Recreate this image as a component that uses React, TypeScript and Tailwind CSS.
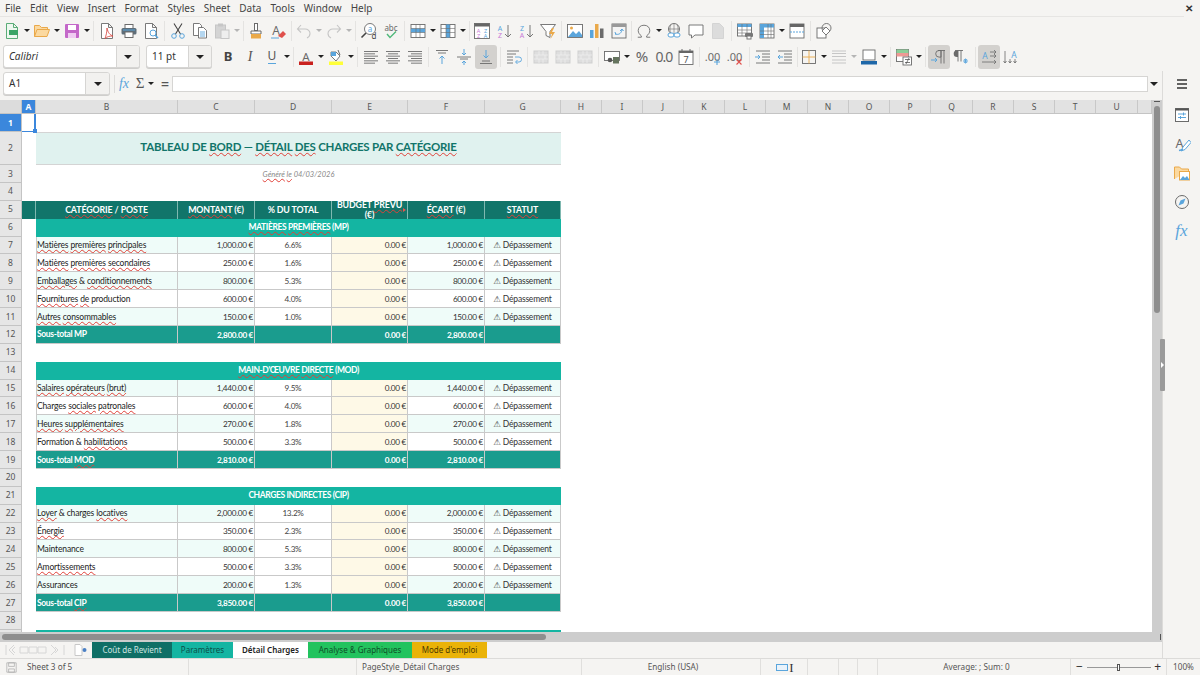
import type { ReactNode } from "react";

const BLUE = "#5aa5dc";
const GRAY = "#6b6b6b";
const LIGHT = "#c6c6c6";
const ORANGE = "#eaa94a";

function Ic({ children, size = 18 }: { children: ReactNode; size?: number }) {
  return (
    <svg width={size} height={size} viewBox="0 0 18 18" fill="none">
      {children}
    </svg>
  );
}

// toolbar pieces
function I({ children, active }: { children: ReactNode; active?: boolean }) {
  return (
    <div className={`flex h-[24px] w-[22px] shrink-0 items-center justify-center rounded-[3px] ${active ? "bg-[#d3d1ce]" : ""}`}>
      {children}
    </div>
  );
}
function D({ off }: { off?: boolean }) {
  return (
    <div className="flex w-[8px] shrink-0 justify-center">
      <div className={`h-0 w-0 border-x-[3px] border-t-[3px] border-x-transparent ${off ? "border-t-[#b5b5b5]" : "border-t-[#222]"}`} />
    </div>
  );
}
function S({ w = "w-[5px]" }: { w?: string }) {
  return (
    <div className={`flex h-[20px] shrink-0 justify-center ${w}`}>
      <div className="h-full w-px bg-[#e4e3e1]" />
    </div>
  );
}
function Txt({ x, y, s, fill, children, w = 400, it }: { x: number; y: number; s: number; fill: string; children: string; w?: number; it?: boolean }) {
  return (
    <text x={x} y={y} fontSize={s} fill={fill} fontWeight={w} fontStyle={it ? "italic" : "normal"} fontFamily="Noto Sans" textAnchor="middle">
      {children}
    </text>
  );
}
function Lines({ rows, c = GRAY }: { rows: [number, number][]; c?: string }) {
  const gap = 14 / rows.length;
  return (
    <Ic>
      {rows.map(([a, b], i) => (
        <line key={i} x1={a} x2={b} y1={3.5 + i * gap} y2={3.5 + i * gap} stroke={c} strokeWidth=".9" />
      ))}
    </Ic>
  );
}
function Doc({ c = GRAY, fill = "#fff" }: { c?: string; fill?: string }) {
  return <path d="M3.500 1.500h7l4 4v11h-11z M10.500 1.500v4h4" fill={fill} stroke={c} strokeWidth=".9" />;
}
function GridIc({ fillRow, fillCol }: { fillRow?: boolean; fillCol?: boolean }) {
  return (
    <Ic>
      <rect x="2" y="2.500" width="14" height="13" fill="#fff" stroke={GRAY} strokeWidth=".9" />
      {fillRow && <rect x="2" y="6.500" width="14" height="4" fill={BLUE} />}
      {fillCol && <rect x="7" y="2.500" width="4" height="13" fill={BLUE} />}
      <path d="M2 6.500h14M2 10.500h14M7 2.500v13M11 2.500v13" stroke={GRAY} strokeWidth=".6" />
    </Ic>
  );
}
function DisGrid() {
  return (
    <Ic>
      <rect x="2" y="3" width="14" height="12" fill="#dedede" stroke="#cfcfcf" />
      <path d="M2 7h14M2 11h14M7 3v4M11 3v4M5 7v4M13 7v4M7 11v4M11 11v4" stroke="#eeeeee" strokeWidth=".8" />
    </Ic>
  );
}
function Sort({ top, bot }: { top: string; bot: string }) {
  return (
    <Ic>
      <Txt x={5} y={8.500} s={7} fill={BLUE}>{top}</Txt>
      <Txt x={5} y={16} s={7} fill="#c77bd6">{bot}</Txt>
      <path d="M13 3v12M10 12l3 3 3-3" stroke={GRAY} strokeWidth=".9" />
    </Ic>
  );
}

function ToolbarOne() {
  return (
    <div className="flex h-[25px] items-center pl-[1px] pt-[2px]">
      <I><Ic><Doc c="#4aa56a" fill="#eef8f0" /><rect x="6" y="8" width="9" height="5" fill="#3aa566" /></Ic></I><D />
      <I><Ic><path d="M1.500 14.500v-11h5l2 2h6v2M1.500 14.500l2.500-7h12.500l-2.500 7z" fill="#fbd9a0" stroke={ORANGE} /></Ic></I><D />
      <I><Ic><rect x="2" y="2" width="14" height="14" rx="1" fill="#c468c9" /><rect x="5" y="3" width="8" height="5" fill="#fff" /><rect x="5" y="11" width="8" height="5" fill="#f0cdf2" /></Ic></I><D />
      <S />
      <I><Ic><Doc /><path d="M9 6c1 5 3 7 6 8-3 0-6 .5-8 2.500 1-3 2-6 2-10.500z" fill="none" stroke="#d8504a" strokeWidth=".9" /></Ic></I>
      <I><Ic><rect x="5" y="2.500" width="8" height="4" fill="#fff" stroke={GRAY} /><rect x="1.500" y="6" width="15" height="6.500" rx="1.500" fill="#5f6e79" /><rect x="5" y="10" width="8" height="5.500" fill="#fff" stroke={GRAY} /><rect x="3" y="7.500" width="12" height="1" fill={BLUE} /></Ic></I>
      <I><Ic><Doc /><circle cx="11" cy="11" r="3" fill="#fff" stroke={BLUE} /><path d="M13 13l3 3" stroke={BLUE} strokeWidth="1.500" /></Ic></I>
      <S />
      <I><Ic><path d="M5 1.500l6.500 10.500M13 1.500L6.500 12" stroke="#444" strokeWidth="1.100" /><circle cx="5" cy="14" r="2.300" stroke={BLUE} /><circle cx="13" cy="14" r="2.300" stroke={BLUE} /></Ic></I>
      <I><Ic><path d="M2.500 1.500h6l2 2v10h-8z" fill="#fff" stroke={GRAY} strokeWidth=".9" /><path d="M7.500 5.500h5l3 3v7.500h-8z" fill="#fff" stroke={GRAY} strokeWidth=".9" /><path d="M9 10h5M9 12h5M9 14h5" stroke={BLUE} strokeWidth=".9" /></Ic></I>
      <I><Ic><rect x="2.500" y="3" width="10" height="13" fill="#d4d4d4" stroke={LIGHT} /><rect x="5" y="1.500" width="5" height="3" fill={LIGHT} /><rect x="8" y="8" width="8" height="8.500" fill="#eee" stroke={LIGHT} /></Ic></I><D off />
      <S w="w-[4px]" />
      <I><Ic><rect x="7.500" y="1.500" width="3" height="7" fill="#fff" stroke={GRAY} /><path d="M4 9h10v3H4z" fill="#fff" stroke={GRAY} /><path d="M4 12h10v4.500H4z" fill={ORANGE} /></Ic></I>
      <I><Ic><Txt x={7} y={13} s={12} fill={GRAY}>A</Txt><path d="M9 14l5-5 3 3-4 4z" fill="#e0504c" /><path d="M2 16h8" stroke={BLUE} /></Ic></I>
      <S w="w-[4px]" />
      <I><Ic><path d="M6 3L2.500 7 6 10.500M3 7h7c3 0 5 2 5 4.500 0 2-1 3.500-3 4.500" stroke={LIGHT} strokeWidth="1.100" /></Ic></I><D off />
      <I><Ic><path d="M12 3l3.500 4L12 10.500M15 7H8c-3 0-5 2-5 4.500 0 2 1 3.500 3 4.500" stroke={LIGHT} strokeWidth="1.100" /></Ic></I><D off />
      <S />
      <I><Ic><circle cx="10" cy="7" r="5.500" fill="#fff" stroke={GRAY} strokeWidth=".9" /><path d="M6 11l-4.500 4.500" stroke="#444" strokeWidth="1.600" /><Txt x={10} y={9.500} s={8} fill={BLUE}>a</Txt><Txt x={14} y={17} s={8} fill="#444">d</Txt></Ic></I>
      <I><Ic><Txt x={9} y={9} s={8} fill={GRAY}>abc</Txt><path d="M5 12l3 3.500 6-6" stroke="#4fb87a" strokeWidth="1.400" /></Ic></I>
      <S />
      <I><GridIc fillRow /></I><D />
      <I><GridIc fillCol /></I><D />
      <S w="w-[4px]" />
      <I><Ic><rect x="1.500" y="1.500" width="15" height="15" fill="#fff" stroke={GRAY} strokeWidth=".9" /><rect x="1.500" y="1.500" width="15" height="3" fill="#666" /><Txt x={5.500} y={10.500} s={5.500} fill="#c77bd6">A</Txt><Txt x={5.500} y={16} s={5.500} fill="#c77bd6">Z</Txt><Txt x={12.500} y={10.500} s={5.500} fill={BLUE}>Z</Txt><Txt x={12.500} y={16} s={5.500} fill={BLUE}>A</Txt></Ic></I>
      <I><Sort top="A" bot="Z" /></I>
      <I><Sort top="Z" bot="A" /></I>
      <I><Ic><path d="M1.500 2.500h15l-5.500 7v6l-4-2v-4z" fill="#fff" stroke={GRAY} strokeWidth=".9" /><path d="M13 6l-3 6h3l-1.500 5 4.500-7h-3l2-4z" fill={ORANGE} /></Ic></I>
      <S />
      <I><Ic><rect x="1.500" y="2.500" width="15" height="13" fill="#fff" stroke={GRAY} strokeWidth=".9" /><circle cx="5.500" cy="6" r="1.500" fill={ORANGE} /><path d="M2 15l5-6 3 3 3-3 3 4v2z" fill={BLUE} /></Ic></I>
      <I><Ic><rect x="2" y="8" width="3.500" height="8" fill={BLUE} /><rect x="7" y="2" width="3.500" height="14" fill={ORANGE} /><rect x="12" y="6.500" width="3.500" height="9.500" fill={GRAY} /></Ic></I>
      <I><Ic><rect x="2" y="2" width="14" height="14" fill="#f4f4f4" stroke={GRAY} strokeWidth=".9" /><rect x="2" y="2" width="14" height="3" fill="#999" /><path d="M6 12c2 1 5 0 6-4M10 9l2-2 1.500 2M5 10l1 3" stroke={BLUE} /></Ic></I>
      <S w="w-[3px]" />
      <I><svg width="16" height="16" viewBox="0 0 18 18" fill="none"><path d="M2 16h4v-1.500C4 13 2.500 11 2.500 8.500 2.500 5 5 2.500 9 2.500s6.500 2.500 6.500 6c0 2.500-1.500 4.500-3.500 6V16h4" stroke={GRAY} strokeWidth="1" /></svg></I><D />
      <I><Ic><circle cx="9" cy="7" r="5.500" stroke={GRAY} strokeWidth=".9" /><path d="M3.500 7h11M9 1.500v11M6 2.500c-1.500 3-1.500 6 0 9M12 2.500c1.500 3 1.500 6 0 9" stroke={GRAY} strokeWidth=".6" /><rect x="3" y="11" width="6" height="4" rx="2" fill="#fff" stroke={BLUE} /><rect x="9" y="11" width="6" height="4" rx="2" fill="#fff" stroke={BLUE} /></Ic></I>
      <I><Ic><path d="M2 3h14v10H8l-3.500 3v-3H2z" fill="#fff" stroke={GRAY} strokeWidth=".9" /></Ic></I>
      <I><Ic><path d="M3.500 1.500h7l4 4v11h-11z" fill="#dcdcdc" stroke="#d4d4d4" /></Ic></I>
      <S />
      <I><Ic><rect x="1.500" y="2" width="14" height="12" fill="#fff" stroke={GRAY} strokeWidth=".9" /><rect x="1.500" y="2" width="14" height="3" fill={BLUE} /><path d="M1.500 8h14M1.500 11h14M6 2v12M11 2v12" stroke={GRAY} strokeWidth=".6" /><rect x="9" y="11" width="8" height="4" rx="1" fill="#777" /><rect x="11" y="14" width="4" height="3" fill="#fff" stroke="#777" /></Ic></I>
      <I><Ic><rect x="2" y="2" width="14" height="14" fill="#fff" stroke={GRAY} strokeWidth=".9" /><rect x="2" y="2" width="14" height="3.500" fill={BLUE} /><rect x="2" y="2" width="4" height="14" fill={BLUE} /><path d="M2 9h14M2 12.500h14M10 2v14M13 2v14" stroke={GRAY} strokeWidth=".6" /></Ic></I><D />
      <I><Ic><rect x="2" y="2" width="14" height="14" fill="#fff" stroke={GRAY} strokeWidth=".9" /><rect x="2" y="2" width="14" height="3" fill="#666" /><path d="M2 10h14" stroke={BLUE} strokeDasharray="2 1" /></Ic></I>
      <S />
      <I><Ic><rect x="2" y="6" width="9" height="10" fill="#fff" stroke={GRAY} strokeWidth=".9" /><circle cx="11.500" cy="6" r="4.500" fill="none" stroke={GRAY} strokeWidth=".9" /><path d="M11 5l4 4-4 4-4-4z" fill="#fff" stroke={GRAY} strokeWidth=".9" /></Ic></I>
    </div>
  );
}

function Combo({ label, w, drop, italic }: { label: string; w: string; drop: string; italic?: boolean }) {
  return (
    <div className={`flex h-[23px] shrink-0 overflow-hidden rounded-[3px] border border-[#d6d5d3] bg-white text-[#333] shadow-[0_1px_0_#cfcecc] ${w}`}>
      <div className={`flex flex-1 items-center pl-[5px] ${italic ? "italic" : ""}`}>{label}</div>
      <div className={`flex items-center justify-center border-l border-[#d6d5d3] bg-[#f2f1ef] ${drop}`}>
        <div className="h-0 w-0 border-x-[4px] border-t-[4px] border-x-transparent border-t-[#222]" />
      </div>
    </div>
  );
}

function ToolbarTwo() {
  const L: [number, number][] = [[2, 16], [2, 13], [2, 16], [2, 13], [2, 16], [2, 13]];
  const C: [number, number][] = [[2, 16], [4, 14], [2, 16], [4, 14], [2, 16], [4, 14]];
  const R: [number, number][] = [[2, 16], [5, 16], [2, 16], [5, 16], [2, 16], [5, 16]];
  return (
    <div className="flex h-[29px] items-center pl-[3px] text-[10px]">
      <Combo label="Calibri" italic w="w-[137px]" drop="w-[23px]" />
      <div className="w-[6px]" />
      <Combo label="11 pt" w="w-[66px]" drop="w-[23px]" />
      <div className="w-[5px]" />
      <I><span className="text-[13px] font-bold text-[#444]">B</span></I>
      <I><span className="font-['Liberation_Serif',serif] text-[14px] italic text-[#555]">I</span></I>
      <I><span className="border-b border-[#5aa5dc] text-[12px] leading-[14px] text-[#555]">U</span></I><D />
      <S w="w-[4px]" />
      <I><Ic><Txt x={9} y={12.500} s={11.500} fill={GRAY}>A</Txt><rect x="2" y="13.500" width="14" height="3.500" fill="#c9211e" /></Ic></I><D />
      <I><Ic><path d="M4 4h5l4 4-4 5-5-5z" fill="#fff" stroke={GRAY} strokeWidth=".9" /><path d="M4 4h5v4H4z" fill={BLUE} /><path d="M11 2l2 5" stroke={GRAY} /><rect x="2" y="13.500" width="14" height="3.500" fill="#ffff38" /></Ic></I><D />
      <S />
      <I><Lines rows={L} /></I>
      <I><Lines rows={C} /></I>
      <I><Lines rows={R} /></I>
      <S />
      <I><Ic><path d="M3 2.500h12M5 5h8" stroke={GRAY} strokeWidth=".9" /><path d="M9 16V8M6.500 10.500L9 8l2.500 2.500" stroke={BLUE} /></Ic></I>
      <I><Ic><path d="M2 9h14M5 11h8" stroke={GRAY} strokeWidth=".9" /><path d="M9 1v6M7 5l2 2 2-2M9 17v-4M7 15l2-2 2 2" stroke={BLUE} /></Ic></I>
      <I active><Ic><path d="M3 15.500h12M5 13h8" stroke={GRAY} strokeWidth=".9" /><path d="M9 2v8M6.500 7.500L9 10l2.500-2.500" stroke={BLUE} /></Ic></I>
      <S w="w-[6px]" />
      <I><Ic><path d="M2 3h12M2 6h9M2 9h6M2 12h6M2 15h6" stroke={GRAY} strokeWidth=".9" /><path d="M10 9h4a2 2 0 010 5h-3M12.500 12l-2 2 2 2" stroke={BLUE} strokeWidth=".9" /></Ic></I>
      <S />
      <I><DisGrid /></I>
      <I><DisGrid /></I>
      <I><DisGrid /></I>
      <S />
      <I><Ic><rect x="1.500" y="3.500" width="15" height="9" fill="#fff" stroke={GRAY} strokeWidth=".9" /><circle cx="7" cy="12" r="2.300" fill="#555" /><rect x="10" y="9" width="6" height="6.500" fill="#66755f" /></Ic></I><D />
      <I><span className="text-[15px] text-[#666]">%</span></I>
      <I><span className="text-[14px] tracking-[-1px] text-[#666]">0.0</span></I>
      <I><Ic><rect x="2" y="3" width="14" height="13.500" fill="#fff" stroke={GRAY} strokeWidth=".9" /><rect x="2" y="3" width="14" height="2" fill="#666" /><path d="M5 1v3M13 1v3" stroke="#666" /><Txt x={9} y={15} s={9} fill="#555">7</Txt></Ic></I>
      <S />
      <I><Ic><Txt x={8.500} y={13} s={11} fill={GRAY}>.00</Txt><path d="M13 11v6M10 14h6" stroke={BLUE} strokeWidth="1.100" /></Ic></I>
      <I><Ic><Txt x={8.500} y={13} s={11} fill={GRAY}>.00</Txt><path d="M10.500 11.500l5 5M15.500 11.500l-5 5" stroke="#e0504c" strokeWidth="1.100" /></Ic></I>
      <S w="w-[6px]" />
      <I><Ic><path d="M2 3h14M8 6h8M8 9h8M8 12h8M2 15h14" stroke={GRAY} strokeWidth=".9" /><path d="M1 9h5M4 7l2 2-2 2" stroke={BLUE} /></Ic></I>
      <I><Ic><path d="M2 3h14M8 6h8M8 9h8M8 12h8M2 15h14" stroke={GRAY} strokeWidth=".9" /><path d="M2 9h5M4 7L2 9l2 2" stroke={BLUE} /></Ic></I>
      <S w="w-[2px]" />
      <I><Ic><rect x="2.500" y="2.500" width="13" height="13" stroke={GRAY} strokeWidth=".9" /><path d="M9 2.500v13M2.500 9h13" stroke={ORANGE} strokeWidth=".9" /></Ic></I><D />
      <I><Ic><path d="M2 3h14M2 5.500h14M2 8.500h14M2 12h14M2 15h14" stroke={LIGHT} /></Ic></I><D off />
      <I><Ic><rect x="3" y="2" width="12" height="10" fill="#fff" stroke={GRAY} strokeWidth=".9" /><rect x="1" y="13" width="16" height="3.500" fill="#1e67a8" /></Ic></I><D />
      <S />
      <I><Ic><rect x="1.500" y="1.500" width="12" height="12" fill="#fff" stroke={GRAY} strokeWidth=".9" /><rect x="1.500" y="1.500" width="12" height="3.500" fill="#8ccf98" /><rect x="1.500" y="5" width="12" height="3.500" fill="#ee9a94" /><rect x="8" y="9" width="8.500" height="8" fill="#fff" stroke={GRAY} strokeWidth=".9" /><path d="M10 11.500h5M10 14.500h5M14 10l-3 6" stroke="#444" strokeWidth=".7" /></Ic></I><D />
      <S />
      <I active><Ic><path d="M8 2.500h7M11 2.500v13M14 2.500v13" stroke={GRAY} strokeWidth=".9" /><path d="M11 2.500H9a3.300 3.300 0 000 6.600h2z" stroke={GRAY} strokeWidth=".9" /><path d="M1 12h6M5 10l2 2-2 2" stroke={BLUE} /></Ic></I>
      <I><Ic><path d="M3 2.500h8M6 2.500v11M9 2.500v11" stroke={GRAY} strokeWidth=".9" /><path d="M6 2.500H5a3.300 3.300 0 000 6.600h1z" fill={GRAY} /><path d="M11 13h5M13.500 10.500v5M12 11l3 4M15 11l-3 4" stroke={BLUE} strokeWidth=".9" /></Ic></I>
      <S w="w-[6px]" />
      <I active><Ic><Txt x={5} y={10.500} s={8.500} fill={BLUE}>A</Txt><path d="M10 4h6M14 2l2 2-2 2M10 8h6M14 6l2 2-2 2M2 14h14M14 12l2 2-2 2" stroke={GRAY} strokeWidth=".8" /></Ic></I>
      <I><Ic><Txt x={12} y={10} s={8.500} fill={BLUE}>A</Txt><path d="M3 3v12M1.500 13L3 15l1.500-2M8 11v4M6.500 13L8 15l1.500-2M13 11v4M11.500 13l1.500 2 1.500-2" stroke={GRAY} strokeWidth=".8" /></Ic></I>
    </div>
  );
}

function FormulaBar() {
  return (
    <div className="flex h-[29px] items-center pb-[4px] pl-[3px] pr-[2px] text-[10px]">
      <Combo label="A1" w="w-[107px]" drop="w-[24px]" />
      <div className="ml-[4px] h-[18px] w-px bg-[#dcdbd9]" />
      <span className="ml-[2px] w-[14px] text-center font-['Liberation_Serif',serif] text-[14px] italic text-[#5aa5dc]">fx</span>
      <span className="ml-[2px] w-[14px] text-center font-['Liberation_Serif',serif] text-[15px] text-[#555]">Σ</span>
      <D />
      <span className="ml-[3px] w-[14px] text-center text-[14px] font-semibold text-[#555]">=</span>
      <div className="h-[16px] flex-1 border border-[#d6d5d3] bg-white" />
      <div className="flex w-[12px] justify-center">
        <div className="h-0 w-0 border-x-[4px] border-t-[4px] border-x-transparent border-t-[#222]" />
      </div>
    </div>
  );
}

const COLS: [string, string][] = [
  ["A", "w-[14px]"], ["B", "w-[142px]"], ["C", "w-[77px]"], ["D", "w-[77px]"], ["E", "w-[76px]"], ["F", "w-[77px]"], ["G", "w-[76px]"],
  ["H", "w-[41px]"], ["I", "w-[41px]"], ["J", "w-[41px]"], ["K", "w-[41px]"], ["L", "w-[41px]"], ["M", "w-[42px]"], ["N", "w-[41px]"],
  ["O", "w-[41px]"], ["P", "w-[41px]"], ["Q", "w-[42px]"], ["R", "w-[41px]"], ["S", "w-[41px]"], ["T", "w-[41px]"], ["U", "w-[42px]"], ["", "w-[14px]"],
];

function ColumnHeader() {
  return (
    <div className="flex h-[14px] shrink-0 border-b border-[#c4c4c4] bg-[#e2e2e2] font-['Noto_Sans'] text-[8.500px] leading-[14px] text-[#555]">
      <div className="w-[22px] shrink-0 border-r border-[#c4c4c4] bg-[#dcdcdc]" />
      {COLS.map(([n, w]) => (
        <div key={n} className={`shrink-0 border-r border-[#c8c8c8] text-center ${w} ${n === "A" ? "bg-[#3b87dc] font-bold text-white" : ""}`}>
          {n}
        </div>
      ))}
    </div>
  );
}

function Wavy({ t }: { t: string }) {
  return (
    <>
      {t.split(" ").map((w, i) => (
        <span key={i}>
          {i > 0 && " "}
          {w.startsWith("~") ? (
            <span className="underline decoration-[#e04038] decoration-wavy decoration-1 underline-offset-[0.5px]">{w.slice(1)}</span>
          ) : (
            w
          )}
        </span>
      ))}
    </>
  );
}

function RowHead({ n, h = "h-full" }: { n: number; h?: string }) {
  const sel = n === 1;
  return (
    <div className={`flex w-[22px] shrink-0 items-center justify-center border-b border-r border-[#c4c4c4] pt-[1px] font-['Noto_Sans'] text-[8.500px] tracking-normal ${h} ${sel ? "bg-[#3b87dc] font-bold text-white" : "bg-[#e6e6e6] text-[#555]"}`}>
      {n}
    </div>
  );
}

function Row({ n, h = "h-[17.880px]", children }: { n: number; h?: string; children?: ReactNode }) {
  return (
    <div className={`flex shrink-0 ${h}`}>
      <RowHead n={n} />
      {children}
    </div>
  );
}

const cell = "flex shrink-0 items-center overflow-hidden whitespace-nowrap border-b border-r border-[#c9c9c9] px-[1px] pt-[1px]";
const num = "text-[8.200px] tracking-[-0.3px]";

function DataRow({ n, alt, label, c, d, f }: { n: number; alt: boolean; label: string; c: string; d: string; f: string }) {
  const bg = alt ? "bg-[#effcf9]" : "bg-white";
  return (
    <Row n={n}>
      <div className="w-[14px] shrink-0" />
      <div className={`${cell} w-[142px] border-l !pl-0 tracking-[-0.15px] text-[#222] ${bg}`}><span><Wavy t={label} /></span></div>
      <div className={`${cell} ${num} w-[77px] justify-end text-[#333] ${bg}`}>{c}</div>
      <div className={`${cell} ${num} w-[77px] justify-center bg-white text-[#444]`}>{d}</div>
      <div className={`${cell} ${num} w-[76px] justify-end bg-[#fef9e7] text-[#333]`}>0.00 €</div>
      <div className={`${cell} ${num} w-[77px] justify-end text-[#333] ${bg}`}>{f}</div>
      <div className={`${cell} w-[76px] justify-center tracking-[-0.2px] text-[#333] ${bg}`}>⚠ Dépassement</div>
    </Row>
  );
}

function SectionRow({ n, label }: { n: number; label: string }) {
  return (
    <Row n={n}>
      <div className="w-[14px] shrink-0" />
      <div className="flex w-[525px] shrink-0 items-center justify-center bg-[#14b5a2] font-bold tracking-[-0.4px] text-white">
        <span><Wavy t={label} /></span>
      </div>
    </Row>
  );
}

function SubRow({ n, label, c, f }: { n: number; label: string; c: string; f: string }) {
  const sub = "border-[#7cc7be] bg-[#1a9c8e] font-bold text-white";
  return (
    <Row n={n}>
      <div className="w-[14px] shrink-0" />
      <div className={`${cell} ${sub} w-[142px] tracking-[-0.35px]`}><span><Wavy t={label} /></span></div>
      <div className={`${cell} ${sub} ${num} w-[77px] justify-end`}>{c}</div>
      <div className={`${cell} ${sub} w-[77px]`} />
      <div className={`${cell} ${sub} ${num} w-[76px] justify-end`}>0.00 €</div>
      <div className={`${cell} ${sub} ${num} w-[77px] justify-end`}>{f}</div>
      <div className={`${cell} ${sub} w-[76px]`} />
    </Row>
  );
}

const MP = [
  [7, "~Matières ~premières ~principales", "1,000.00 €", "6.6%"],
  [8, "~Matières ~premières ~secondaires", "250.00 €", "1.6%"],
  [9, "~Emballages & ~conditionnements", "800.00 €", "5.3%"],
  [10, "~Fournitures ~de production", "600.00 €", "4.0%"],
  [11, "~Autres ~consommables", "150.00 €", "1.0%"],
] as const;
const MOD = [
  [15, "~Salaires ~opérateurs ~(brut)", "1,440.00 €", "9.5%"],
  [16, "Charges ~sociales ~patronales", "600.00 €", "4.0%"],
  [17, "~Heures ~supplémentaires", "270.00 €", "1.8%"],
  [18, "Formation & ~habilitations", "500.00 €", "3.3%"],
] as const;
const CIP = [
  [22, "~Loyer & charges ~locatives", "2,000.00 €", "13.2%"],
  [23, "~Énergie", "350.00 €", "2.3%"],
  [24, "Maintenance", "800.00 €", "5.3%"],
  [25, "~Amortissements", "500.00 €", "3.3%"],
  [26, "Assurances", "200.00 €", "1.3%"],
] as const;

function Block({ rows }: { rows: readonly (readonly [number, string, string, string])[] }) {
  return (
    <>
      {rows.map(([n, label, c, d], i) => (
        <DataRow key={n} n={n} alt={i % 2 === 0} label={label} c={c} d={d} f={c} />
      ))}
    </>
  );
}

function Sheet() {
  const head = "flex shrink-0 items-center justify-center overflow-hidden border-r border-[#7fb8b0] bg-[#11756a] text-center text-[8.800px] font-bold tracking-[-0.1px] text-white";
  return (
    <div className="min-h-0 flex-1 overflow-hidden bg-white font-['Lato','DejaVu_Sans',sans-serif] text-[8.500px]">
      <Row n={1} h="h-[18px]">
        <div className="relative w-[14px] shrink-0 border-b border-r-2 border-[#3b87dc]">
          <div className="absolute bottom-[-2px] right-[-3px] h-[4px] w-[4px] bg-[#3b87dc]" />
        </div>
      </Row>
      <Row n={2} h="h-[33px]">
        <div className="w-[14px] shrink-0" />
        <div className="flex w-[525px] shrink-0 items-center justify-center border-y border-[#d4d4d4] bg-[#e0f2ef] pb-[3px] text-[11.500px] font-bold tracking-[-0.25px] text-[#11756a]">
          <span><Wavy t="TABLEAU DE ~BORD — ~DÉTAIL ~DES CHARGES PAR ~CATÉGORIE" /></span>
        </div>
      </Row>
      <Row n={3}>
        <div className="w-[14px] shrink-0" />
        <div className="flex w-[525px] shrink-0 items-center justify-center pt-[1px] text-[7.500px] italic text-[#8a8a8a]">
          <span><Wavy t="~Généré ~le 04/03/2026" /></span>
        </div>
      </Row>
      <Row n={4} />
      <Row n={5}>
        <div className={`${head} w-[14px]`} />
        <div className={`${head} w-[142px]`}><span><Wavy t="~CATÉGORIE / ~POSTE" /></span></div>
        <div className={`${head} w-[77px]`}><span><Wavy t="~MONTANT (€)" /></span></div>
        <div className={`${head} w-[77px]`}>% DU TOTAL</div>
        <div className={`${head} relative w-[76px] leading-[10px]`}>
          <span>BUDGET <Wavy t="~PRÉVU" /><br />(€)</span>
          <div className="absolute right-[1px] top-[7px] h-0 w-0 border-y-[2px] border-l-[3px] border-y-transparent border-l-[#e3584f]" />
        </div>
        <div className={`${head} w-[77px]`}><span><Wavy t="~ÉCART (€)" /></span></div>
        <div className={`${head} w-[76px]`}><span><Wavy t="~STATUT" /></span></div>
      </Row>
      <SectionRow n={6} label="~MATIÈRES ~PREMIÈRES (MP)" />
      <Block rows={MP} />
      <SubRow n={12} label="Sous-total MP" c="2,800.00 €" f="2,800.00 €" />
      <Row n={13} />
      <SectionRow n={14} label="~MAIN-D'ŒUVRE ~DIRECTE (MOD)" />
      <Block rows={MOD} />
      <SubRow n={19} label="Sous-total ~MOD" c="2,810.00 €" f="2,810.00 €" />
      <Row n={20} />
      <SectionRow n={21} label="CHARGES INDIRECTES (CIP)" />
      <Block rows={CIP} />
      <SubRow n={27} label="Sous-total ~CIP" c="3,850.00 €" f="3,850.00 €" />
      <Row n={28} />
      <SectionRow n={29} label="" />
    </div>
  );
}

function NavButtons() {
  return (
    <div className="flex w-[69px] shrink-0 items-center pl-[5px]">
      <svg width="60" height="12" viewBox="0 0 60 12" fill="none" stroke="#d6d6d6">
        <path d="M1 1v10M9 1L4 6l5 5M10 3L7 6l3 3" />
        <path d="M15 3h8v6h-8zM24 3h8v6h-8zM33 3h8v6h-8z" />
        <path d="M46 1l5 5-5 5M50 3l3 3-3 3M59 1v10" />
      </svg>
    </div>
  );
}

const TABS: [string, string][] = [
  ["Coût de Revient", "w-[80px] bg-[#0f6f66] text-[#cfe6e2]"],
  ["Paramètres", "w-[61px] bg-[#14b5a2] text-[#0c4f49]"],
  ["Détail Charges", "w-[75px] bg-white font-semibold text-[#222]"],
  ["Analyse & Graphiques", "w-[104px] bg-[#22c35e] text-[#0e4f28]"],
  ["Mode d'emploi", "w-[75px] bg-[#eab308] text-[#4c3a00]"],
];

function TabBar() {
  return (
    <div className="flex h-[16px] shrink-0 text-[8px]">
      <NavButtons />
      <div className="flex w-[23px] shrink-0 items-center gap-[2px] pl-[5px]">
        <svg width="14" height="12" viewBox="0 0 14 12" fill="none">
          <path d="M1 .5h5l2 2v9H1z" fill="#fff" stroke="#c8c8c8" />
          <circle cx="10.500" cy="6" r="2" fill="#4a7fc4" />
        </svg>
      </div>
      {TABS.map(([label, cls]) => (
        <div key={label} className={`flex items-center justify-center whitespace-nowrap ${cls}`}>{label}</div>
      ))}
    </div>
  );
}

function HScroll() {
  return (
    <div className="flex h-[10px] shrink-0 items-center justify-between bg-[#cdcdcd] pl-[2px] pr-[1px]">
      <div className="h-[6px] w-[544px] rounded-[3px] bg-[#8e8e8e]" />
      <div className="h-[6px] w-px bg-[#555]" />
    </div>
  );
}

function VScroll() {
  return (
    <div className="flex w-[10px] shrink-0 flex-col items-center bg-[#cdcdcd]">
      <div className="mt-[1px] h-px w-[6px] bg-[#555]" />
      <div className="mt-[4px] h-[207px] w-[6px] rounded-[3px] bg-[#8e8e8e]" />
    </div>
  );
}

function Sidebar() {
  return (
    <div className="flex w-[38px] shrink-0 flex-col items-center border-l border-[#dcdbd9] pt-[4px]">
      <Ic><path d="M4 5h10M4 9h10M4 13h10" stroke="#333" strokeWidth="1.400" /></Ic>
      <div className="mt-[13px] flex flex-col gap-[11px]">
        <Ic><rect x="2.500" y="2.500" width="13" height="13" stroke={GRAY} fill="#fff" /><rect x="2.500" y="2.500" width="13" height="2" fill="#555" /><path d="M5 8h8M5 11.500h8M10.500 6.500v3M7.500 10v3" stroke={BLUE} /></Ic>
        <Ic><Txt x={6.500} y={13} s={12.500} fill={GRAY}>A</Txt><path d="M16 5l-6 7-2 4 4-1.500 6-7z" fill="#fff" stroke={BLUE} /><path d="M6 15.500l4-1" stroke={BLUE} strokeWidth="1.500" /></Ic>
        <Ic><path d="M1.500 15V3h5l2 2h7v2" fill="#fbd9a0" stroke={ORANGE} /><rect x="6.500" y="7.500" width="10" height="8.500" fill="#fff" stroke={ORANGE} /><path d="M7 16l3-4 2 2 2-2 2.500 4z" fill={BLUE} /></Ic>
        <Ic><circle cx="9" cy="9" r="6.500" stroke={GRAY} /><path d="M12.500 5.500L10.500 10.500 5.500 12.500 7.500 7.500z" fill={BLUE} /></Ic>
        <span className="h-[18px] text-center font-['Liberation_Serif',serif] text-[17px] italic leading-[18px] text-[#5aa5dc]">fx</span>
      </div>
    </div>
  );
}

function StatusBar() {
  const c = "flex h-full shrink-0 items-center border-r border-[#e0dfdd]";
  return (
    <div className="flex h-[17px] shrink-0 items-center border-t border-[#dcdbd9] text-[8.200px] text-[#555]">
      <div className={`${c} w-[189px] pl-[5px]`}>
        <Ic size={13}><path d="M2.500 2.500h13v13h-13z" stroke="#aaa" /><path d="M5 2.500h8v5H5zM5 11h8v4.500H5z" stroke="#aaa" /></Ic>
        <span className="ml-[9px]">Sheet 3 of 5</span>
      </div>
      <div className={`${c} w-[168px]`} />
      <div className={`${c} w-[225px] pl-[5px]`}>PageStyle_Détail Charges</div>
      <div className={`${c} w-[179px] justify-center pl-[4px]`}>English (USA)</div>
      <div className={`${c} w-[47px] justify-center gap-[1px] pl-[2px]`}>
        <div className="h-[7px] w-[12px] border border-[#5aa5dc] bg-[#eaf3fb]" />
        <span className="font-['Liberation_Serif',serif] text-[13px] leading-none text-[#333]">I</span>
      </div>
      <div className={`${c} w-[31px]`} />
      <div className={`${c} w-[19px]`} />
      <div className={`${c} w-[20px]`} />
      <div className={`${c} w-[193px] justify-center pl-[5px]`}>Average: ; Sum: 0</div>
      <div className={`${c} w-[96px] px-[5px]`}>
        <span className="w-[8px] text-[12px] leading-none text-[#333]">−</span>
        <div className="relative mx-[3px] h-px w-[65px] bg-[#999]">
          <div className="absolute left-[30px] top-[-3px] h-[7px] w-[3px] border border-[#555] bg-white" />
        </div>
        <span className="text-[12px] leading-none text-[#333]">+</span>
      </div>
      <div className="flex flex-1 justify-center">100%</div>
    </div>
  );
}

export default function App() {
  const menus = ["File", "Edit", "View", "Insert", "Format", "Styles", "Sheet", "Data", "Tools", "Window", "Help"];
  return (
    <div className="relative flex h-[675px] w-[1200px] flex-col overflow-hidden bg-[#f5f4f2] font-['Noto_Sans',sans-serif]">
      <div className="flex h-[16px] shrink-0 items-center justify-between pl-[5px] pr-[7px] text-[10px] text-[#444]">
        <div className="flex gap-[9px]">
          {menus.map((m) => <span key={m}>{m}</span>)}
        </div>
        <span className="text-[10px] font-bold text-[#333]">✕</span>
      </div>
      <div className="mr-[16px] h-px shrink-0 bg-[#e6e5e3]" />
      <ToolbarOne />
      <ToolbarTwo />
      <div className="flex min-h-0 flex-1">
        <div className="flex min-w-0 flex-1 flex-col">
          <FormulaBar />
          <div className="flex min-h-0 flex-1">
            <div className="flex min-w-0 flex-1 flex-col">
              <ColumnHeader />
              <Sheet />
            </div>
            <VScroll />
          </div>
          <HScroll />
          <TabBar />
        </div>
        <Sidebar />
      </div>
      <StatusBar />
      <div className="absolute left-[1160px] top-[339px] flex h-[52px] w-[5px] items-center justify-center rounded-[1px] bg-[#9a9a9a]">
        <div className="h-0 w-0 border-y-[3px] border-l-[3px] border-y-transparent border-l-white" />
      </div>
    </div>
  );
}
